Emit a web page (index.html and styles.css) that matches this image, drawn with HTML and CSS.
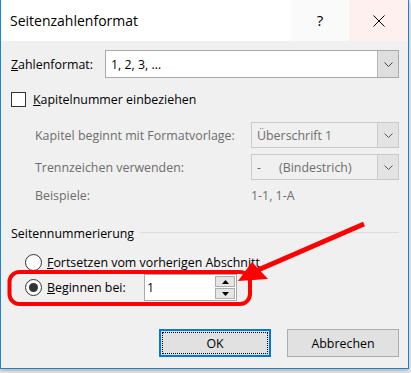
FILE: index.html
```html
<!DOCTYPE html>
<html lang="de">
<head>
    <meta charset="UTF-8">
    <meta name="viewport" content="width=device-width, initial-scale=1.0">
    <title>Seitenzahlenformat</title>
    <link rel="stylesheet" href="styles.css">
</head>
<body>
    <div class="window">
        <div class="titlebar">
            <span class="title">Seitenzahlenformat</span>
            <div class="caption-btn help">?</div>
            <div class="caption-btn close">
                <svg width="12" height="12" viewBox="0 0 12 12"><path d="M0.5 0.5 L11.5 11.5 M11.5 0.5 L0.5 11.5" stroke="#000" stroke-width="1"/></svg>
            </div>
        </div>
        <div class="content">
            <div class="format-row">
                <span class="label"><u>Z</u>ahlenformat:</span>
                <div class="combo format-combo">
                    <span class="combo-value">1, 2, 3, …</span>
                    <span class="combo-btn"><svg width="9" height="5" viewBox="0 0 9 5"><path d="M0.5 0.5 L4.5 4.5 L8.5 0.5" fill="none" stroke="#444" stroke-width="1"/></svg></span>
                </div>
            </div>
            <div class="check-row">
                <span class="checkbox"></span>
                <span><u>K</u>apitelnummer einbeziehen</span>
            </div>
            <div class="chapter-grid">
                <span class="dim">Kapitel beginnt mit Formatvorlage:</span>
                <div class="combo disabled">
                    <span class="combo-value">Überschrift 1</span>
                    <span class="combo-btn"><svg width="9" height="5" viewBox="0 0 9 5"><path d="M0.5 0.5 L4.5 4.5 L8.5 0.5" fill="none" stroke="#555" stroke-width="1"/></svg></span>
                </div>
                <span class="dim">Trennzeichen verwenden:</span>
                <div class="combo disabled">
                    <span class="combo-value"><span class="dash">-</span>(Bindestrich)</span>
                    <span class="combo-btn"><svg width="9" height="5" viewBox="0 0 9 5"><path d="M0.5 0.5 L4.5 4.5 L8.5 0.5" fill="none" stroke="#555" stroke-width="1"/></svg></span>
                </div>
                <span class="dim examples">Beispiele:</span>
                <span class="dim examples">1-1, 1-A</span>
            </div>
            <div class="group-title">
                <span>Seitennummerierung</span>
                <span class="group-line"></span>
            </div>
            <div class="radio-row">
                <span class="radio"></span>
                <span><u>F</u>ortsetzen vom vorherigen Abschnitt</span>
            </div>
            <div class="radio-row start-row">
                <span class="radio checked"></span>
                <span class="start-label"><u>B</u>eginnen bei:</span>
                <div class="spin">
                    <span class="spin-value">1</span>
                    <div class="spin-btns">
                        <span class="spin-btn"><svg width="7" height="4" viewBox="0 0 7 4"><path d="M3.5 0 L7 4 L0 4 Z" fill="#000"/></svg></span>
                        <span class="spin-btn"><svg width="7" height="4" viewBox="0 0 7 4"><path d="M0 0 L7 0 L3.5 4 Z" fill="#000"/></svg></span>
                    </div>
                </div>
            </div>
            <div class="buttons">
                <button class="btn default"><span class="focus">OK</span></button>
                <button class="btn">Abbrechen</button>
            </div>
        </div>
    </div>
    <svg class="annotation" width="411" height="373" viewBox="0 0 411 373">
        <rect x="9.5" y="272" width="240.5" height="32" rx="10" fill="none" stroke="#ff0000" stroke-width="4"/>
        <line x1="364" y1="224" x2="258" y2="270" stroke="#ff0000" stroke-width="5"/>
        <polygon points="252,262 238,281 268,279" fill="#ff0000"/>
    </svg>
</body>
</html>
```

FILE: styles.css
```css
body {
    margin: 0;
    background-color: #ececec;
    font-family: "Open Sans", "Noto Sans", sans-serif;
    font-size: 12.4px;
    color: #000;
    width: 411px;
    height: 373px;
    overflow: hidden;
    position: relative;
}
.window {
    width: 407px;
    height: 368px;
    border: 1px solid #1883d7;
    border-top: none;
    background-color: #f0f0f0;
    box-shadow: 0 2px 4px rgba(0, 0, 0, 0.25);
}
.titlebar {
    display: flex;
    align-items: stretch;
    height: 41px;
    background-color: #fff;
}
.title {
    flex: 1;
    padding-left: 9px;
    font-size: 14px;
    line-height: 42px;
}
.caption-btn {
    display: flex;
    justify-content: center;
    align-items: center;
}
.help {
    width: 58px;
    background-color: #fafafa;
    font-size: 15px;
    padding-bottom: 1px;
}
.close {
    width: 59px;
    background-color: #fdf0ef;
}
.content {
    padding: 9px 9px 0 9px;
}
.format-row {
    display: flex;
    align-items: center;
    height: 28px;
}
.label {
    width: 94px;
    padding-left: 1px;
}
.combo {
    display: flex;
    align-items: stretch;
    border: 1px solid #a9a9a9;
    background-color: #fff;
    box-sizing: border-box;
}
.format-combo {
    width: 294px;
    height: 28px;
}
.combo-value {
    flex: 1;
    display: flex;
    align-items: center;
    padding-left: 5px;
}
.combo-btn {
    width: 20px;
    display: flex;
    justify-content: center;
    align-items: center;
    background-color: #dedede;
    border-left: 1px solid #b5b5b5;
}
.combo.disabled {
    height: 26px;
    background-color: #f0f0f0;
    border-color: #cacaca;
    color: #6d6d6d;
}
.combo.disabled .combo-btn {
    background-color: #e3e3e3;
    border-left-color: #cacaca;
}
.dash {
    width: 22px;
}
.check-row {
    display: flex;
    align-items: center;
    height: 15px;
    margin-top: 14px;
    padding-left: 1px;
}
.checkbox {
    width: 13px;
    height: 13px;
    border: 1px solid #333;
    background-color: #fff;
    margin-right: 7px;
}
.chapter-grid {
    display: grid;
    grid-template-columns: 216px 148px;
    grid-auto-rows: 26px;
    row-gap: 6px;
    align-items: center;
    margin-top: 15px;
    padding-left: 25px;
}
.dim {
    color: #6d6d6d;
}
.examples {
    align-self: start;
    margin-top: 1px;
}
.group-title {
    display: flex;
    align-items: center;
    height: 16px;
    margin-top: 13px;
    padding-left: 1px;
}
.group-line {
    flex: 1;
    height: 1px;
    background-color: #dcdcdc;
    margin-left: 6px;
    margin-top: -1px;
}
.radio-row {
    display: flex;
    align-items: center;
    height: 18px;
    margin-top: 12px;
    padding-left: 15px;
}
.radio {
    width: 15px;
    height: 15px;
    border: 1px solid #333;
    border-radius: 50%;
    background-color: #fff;
    margin-right: 5px;
    display: flex;
    justify-content: center;
    align-items: center;
}
.radio.checked::after {
    content: "";
    width: 9px;
    height: 9px;
    border-radius: 50%;
    background-color: #333;
}
.start-row {
    height: 27px;
    margin-top: 3px;
}
.start-label {
    width: 97px;
}
.spin {
    display: flex;
    width: 93px;
    height: 27px;
    box-sizing: border-box;
    border: 1px solid #a9a9a9;
    background-color: #fff;
}
.spin-value {
    flex: 1;
    display: flex;
    align-items: center;
    padding-left: 2px;
}
.spin-btns {
    display: flex;
    flex-direction: column;
    width: 20px;
    padding: 1px;
    gap: 1px;
}
.spin-btn {
    flex: 1;
    display: flex;
    justify-content: center;
    align-items: center;
    background-color: #e5e5e5;
    border: 1px solid #adadad;
}
.buttons {
    display: flex;
    justify-content: flex-end;
    gap: 16px;
    margin-top: 28px;
}
.btn {
    width: 112px;
    height: 28px;
    box-sizing: border-box;
    border: 1px solid #adadad;
    background-color: #e1e1e1;
    font-family: inherit;
    font-size: 12.4px;
    color: #000;
    padding: 0;
}
.btn.default {
    border: 2px solid #0078d7;
    padding: 1px;
}
.focus {
    display: flex;
    justify-content: center;
    align-items: center;
    height: 100%;
    border: 1px dotted #000;
    box-sizing: border-box;
}
.annotation {
    position: absolute;
    left: 0;
    top: 0;
    pointer-events: none;
}
```
